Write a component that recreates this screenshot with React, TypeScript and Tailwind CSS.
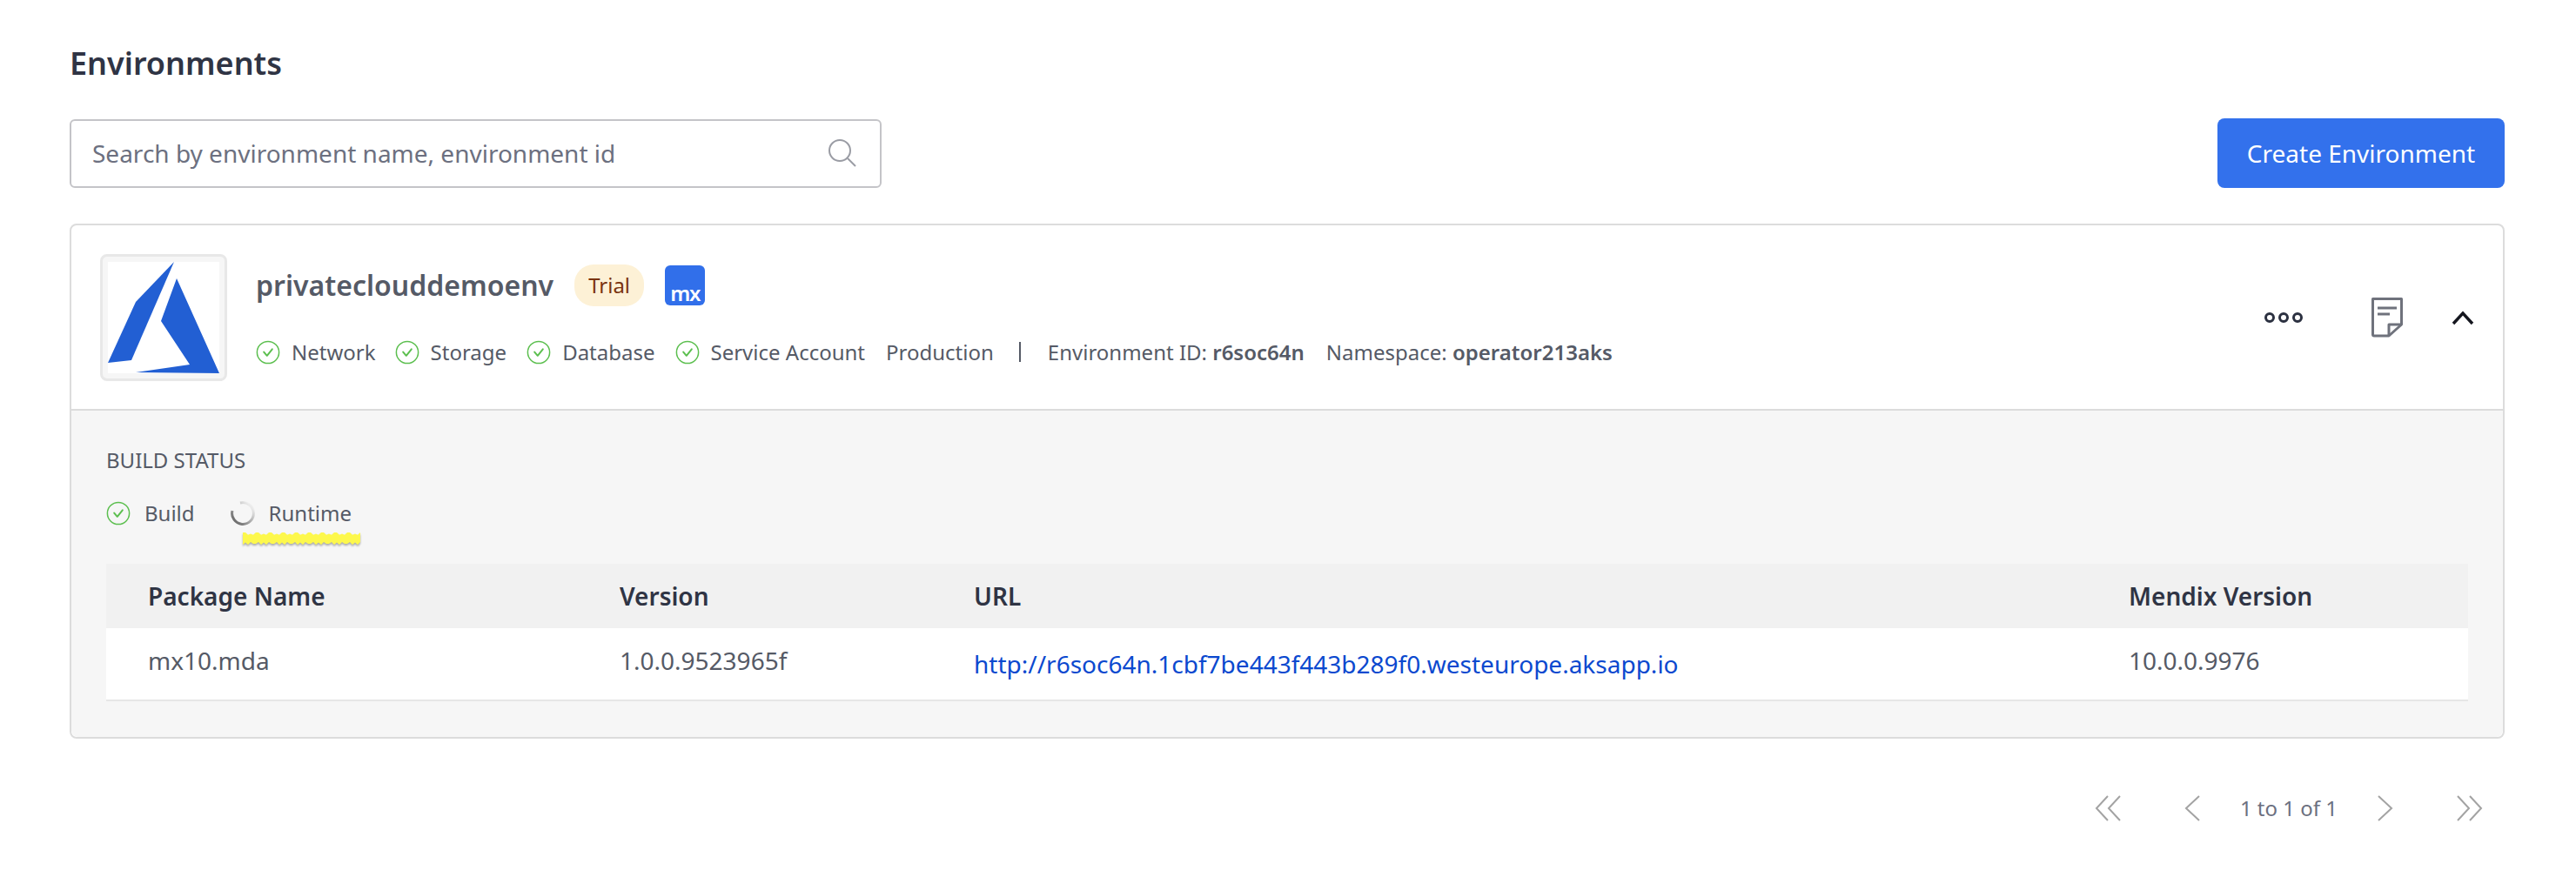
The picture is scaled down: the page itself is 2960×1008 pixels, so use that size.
import React from "react";

const font = { fontFamily: '"Noto Sans", sans-serif' };

// rough edge for the highlighter mark under "Runtime"
const scribbleTop = Array.from({ length: 46 }, (_, i) => `${i * 3 + 1},${1 + ((i * i * 7 + i * 3) % 5) * 0.7}`);
const scribbleBottom = Array.from({ length: 46 }, (_, i) => `${136 - i * 3},${12 + ((i * i * 5 + i) % 7) * 0.5}`);
const scribble = [...scribbleTop, ...scribbleBottom].join(" ");

function CheckCircle() {
  return (
    <svg width="28" height="28" viewBox="0 0 28 28" fill="none" className="shrink-0">
      <circle cx="14" cy="14" r="12.6" stroke="#5cbf4f" strokeWidth="1.5" />
      <path d="M9.2 13.6l3.6 4.2 6-7.4" stroke="#5cbf4f" strokeWidth="2" strokeLinecap="round" strokeLinejoin="round" />
    </svg>
  );
}

function Status({ label }: { label: string }) {
  return (
    <div className="flex items-center gap-[13px]">
      <CheckCircle />
      <span>{label}</span>
    </div>
  );
}

function AzureLogo() {
  return (
    <svg width="128" height="128" viewBox="0 0 128 128" className="bg-white">
      <path d="M76 0L32 46 0 116l27-3z" fill="#225fd3" />
      <path d="M79 19L61 68l33 50-62 9 96 1z" fill="#225fd3" />
    </svg>
  );
}

function MxLogo() {
  return (
    <div className="flex h-[46px] w-[46px] items-end justify-center rounded-[6px] bg-[#316fea] pb-[2px] text-[24px] leading-[24px] font-semibold tracking-[-1.5px] text-white">
      mx
    </div>
  );
}

function PagerIcon({ d }: { d: string }) {
  return (
    <svg width="32" height="30" viewBox="0 0 32 30" fill="none">
      <path d={d} stroke="#a3a3a3" strokeWidth="2" />
    </svg>
  );
}

const gridCols = "grid grid-cols-[542px_407px_1327px_1fr] pl-[48px] text-[28px]";

export default function App() {
  return (
    <div style={font} className="h-[1008px] w-[2960px] bg-white pr-[82px] pl-[80px] text-[24px] text-[#555a66]">
      <h1 className="pt-[50px] text-[36px] leading-[46px] font-semibold text-[#2f3444]">Environments</h1>

      <div className="mt-[40px] flex items-center justify-between">
        <div className="flex h-[79px] w-[933px] items-center justify-between rounded-[6px] border-2 border-[#c4c4c8] pr-[26px] pl-[24px]">
          <span className="text-[28px] text-[#6c7080]">Search by environment name, environment id</span>
          <svg width="34" height="34" viewBox="0 0 34 34" fill="none">
            <circle cx="14" cy="14" r="12" stroke="#9a9ca4" strokeWidth="2" />
            <path d="M23 23l9 9" stroke="#9a9ca4" strokeWidth="2" />
          </svg>
        </div>
        <button className="h-[80px] w-[330px] rounded-[8px] bg-[#3371ec] text-[28px] text-white">Create Environment</button>
      </div>

      <div className="mt-[41px] rounded-[8px] border-2 border-[#dcdcdc]">
        <div className="flex h-[213px] items-center justify-between border-b-2 border-[#dcdcdc] pr-[33px] pl-[33px]">
          <div className="flex items-center gap-[33px]">
            <div className="rounded-[8px] border-[3px] border-[#e8e8e8] bg-[#f6f6f6] p-[6px]">
              <AzureLogo />
            </div>
            <div className="flex flex-col pb-[6px]">
              <div className="flex items-center">
                <span className="text-[32px] leading-[48px] font-semibold text-[#555a66]">privateclouddemoenv</span>
                <span className="ml-[24px] flex h-[48px] w-[80px] items-center justify-center rounded-[22px] bg-[#fdf1d6] text-[24px] text-[#7a3410]">
                  Trial
                </span>
                <span className="ml-[24px]">
                  <MxLogo />
                </span>
              </div>
              <div className="mt-[38px] flex items-center leading-[30px]">
                <Status label="Network" />
                <span className="ml-[22px]"><Status label="Storage" /></span>
                <span className="ml-[23px]"><Status label="Database" /></span>
                <span className="ml-[23px]"><Status label="Service Account" /></span>
                <span className="ml-[24px]">Production</span>
                <span className="ml-[29px] h-[23px] w-[2px] bg-[#555a66]" />
                <span className="ml-[31px]">
                  Environment ID: <b className="font-semibold">r6soc64n</b>
                </span>
                <span className="ml-[25px]">
                  Namespace: <b className="font-semibold">operator213aks</b>
                </span>
              </div>
            </div>
          </div>

          <div className="flex items-center">
            <svg width="44" height="14" viewBox="0 0 44 14" fill="none">
              <circle cx="6" cy="7" r="4.5" stroke="#2b3040" strokeWidth="3" />
              <circle cx="22" cy="7" r="4.5" stroke="#2b3040" strokeWidth="3" />
              <circle cx="38" cy="7" r="4.5" stroke="#2b3040" strokeWidth="3" />
            </svg>
            <svg width="36" height="46" viewBox="0 0 36 46" fill="none" className="ml-[79px]">
              <path d="M20 44H3a1.5 1.5 0 0 1-1.5-1.5v-41h33V31z" stroke="#6f727c" strokeWidth="3" strokeLinejoin="round" />
              <path d="M20 44V31h14.5" stroke="#6f727c" strokeWidth="3" strokeLinejoin="round" />
              <path d="M7 12h22M7 19h14" stroke="#6f727c" strokeWidth="3" />
            </svg>
            <svg width="26" height="18" viewBox="0 0 26 18" fill="none" className="ml-[56px]">
              <path d="M2 16L13 4l11 12" stroke="#15171f" strokeWidth="3.4" />
            </svg>
          </div>
        </div>

        <div className="rounded-b-[8px] bg-[#f6f6f6] px-[40px] pt-[41px] pb-[41px]">
          <div className="text-[24px] leading-[32px]">BUILD STATUS</div>
          <div className="mt-[30px] flex items-center leading-[30px]">
            <div className="flex items-center gap-[16px]">
              <CheckCircle />
              <span>Build</span>
            </div>
            <div className="relative ml-[41px] flex items-center gap-[16px]">
              <svg width="28" height="28" viewBox="0 0 28 28" fill="none">
                <defs>
                  <linearGradient id="spin" x1="0" y1="1" x2="1" y2="0">
                    <stop offset="0.15" stopColor="#707070" />
                    <stop offset="0.85" stopColor="#ececec" />
                  </linearGradient>
                </defs>
                <path d="M2 11A12.4 12.4 0 1 0 11 2" stroke="url(#spin)" strokeWidth="3" />
              </svg>
              <span>Runtime</span>
              <svg width="138" height="18" viewBox="0 0 138 18" className="absolute top-[36px] left-[13px] drop-shadow-[0_2px_1px_rgba(0,0,0,0.3)]">
                <polygon points={scribble} fill="#fdf84c" />
              </svg>
            </div>
          </div>

          <div className="mt-[43px]">
            <div className={`${gridCols} h-[74px] items-center bg-[#f1f1f1] font-semibold text-[#2f3444]`}>
              <span>Package Name</span>
              <span>Version</span>
              <span>URL</span>
              <span>Mendix Version</span>
            </div>
            <div className={`${gridCols} h-[84px] items-start border-b-2 border-[#e6e6e6] bg-white pt-[16px]`}>
              <span>mx10.mda</span>
              <span>1.0.0.9523965f</span>
              <span className="pt-[4px] text-[#0b49cf]">http://r6soc64n.1cbf7be443f443b289f0.westeurope.aksapp.io</span>
              <span>10.0.0.9976</span>
            </div>
          </div>
        </div>
      </div>

      <div className="mt-[62px] flex items-center justify-end pr-[24px]">
        <PagerIcon d="M15 1L2 15l13 14M29 1L16 15l13 14" />
        <span className="ml-[68px]"><PagerIcon d="M20 1L5 15l15 14" /></span>
        <span className="ml-[35px] text-[#6c7080]">1 to 1 of 1</span>
        <span className="ml-[44px]"><PagerIcon d="M3 1l15 14L3 29" /></span>
        <span className="ml-[60px]"><PagerIcon d="M2 1l13 14L2 29M16 1l13 14-13 14" /></span>
      </div>
    </div>
  );
}
